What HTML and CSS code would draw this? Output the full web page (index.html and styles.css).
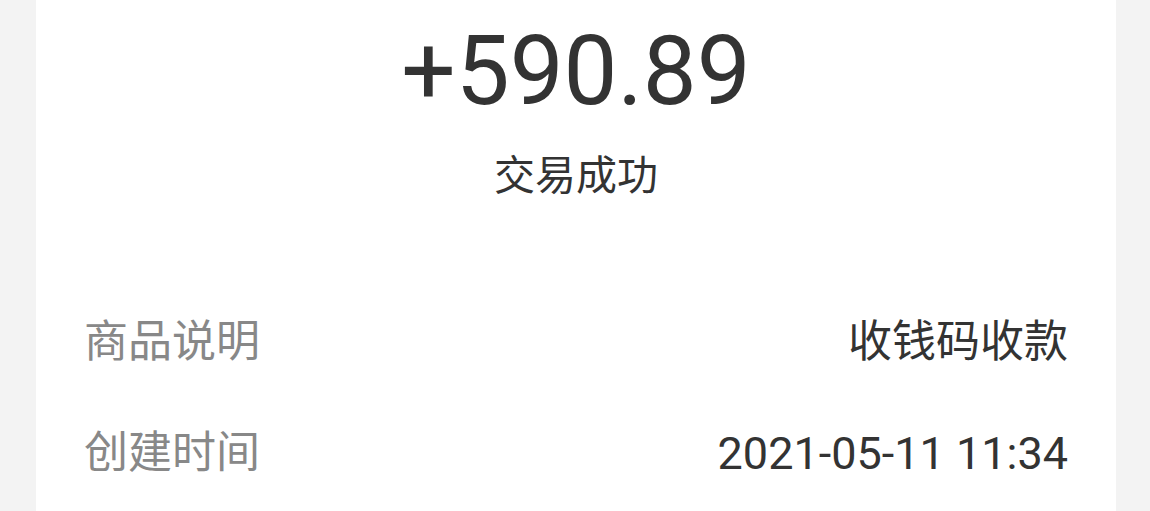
FILE: index.html
```html
<!DOCTYPE html>
<html lang="zh-CN">
<head>
<meta charset="utf-8">
<link rel="stylesheet" href="styles.css">
</head>
<body>
<div class="page">
  <div class="card">
    <div class="amount">+590.89</div>
    <div class="status">交易成功</div>
    <div class="details">
      <div class="row"><span class="label">商品说明</span><span class="value">收钱码收款</span></div>
      <div class="row"><span class="label">创建时间</span><span class="value time">2021-05-11 11:34</span></div>
    </div>
  </div>
</div>
</body>
</html>
```
FILE: styles.css
```css
html, body {
  margin: 0;
  padding: 0;
  background: #f3f3f3;
  font-family: Roboto, "Noto Sans CJK SC", sans-serif;
  overflow: hidden;
}
.page {
  padding: 0 34px 0 36px;
  height: 511px;
}
.card {
  background: #ffffff;
  height: 100%;
  padding: 23px 48px 0 48px;
  box-sizing: border-box;
  display: flex;
  flex-direction: column;
  align-items: stretch;
}
.amount {
  text-align: center;
  font-size: 96px;
  line-height: 96px;
  color: #333333;
}
.status {
  margin-top: 37px;
  text-align: center;
  font-size: 41px;
  line-height: 41px;
  color: #333333;
}
.details {
  margin-top: 90px;
  display: flex;
  flex-direction: column;
}
.row {
  display: flex;
  justify-content: space-between;
  align-items: center;
  font-size: 44px;
  line-height: 111px;
}
.label {
  color: #888888;
}
.value {
  color: #333333;
}
.time {
  font-size: 45px;
}
```
